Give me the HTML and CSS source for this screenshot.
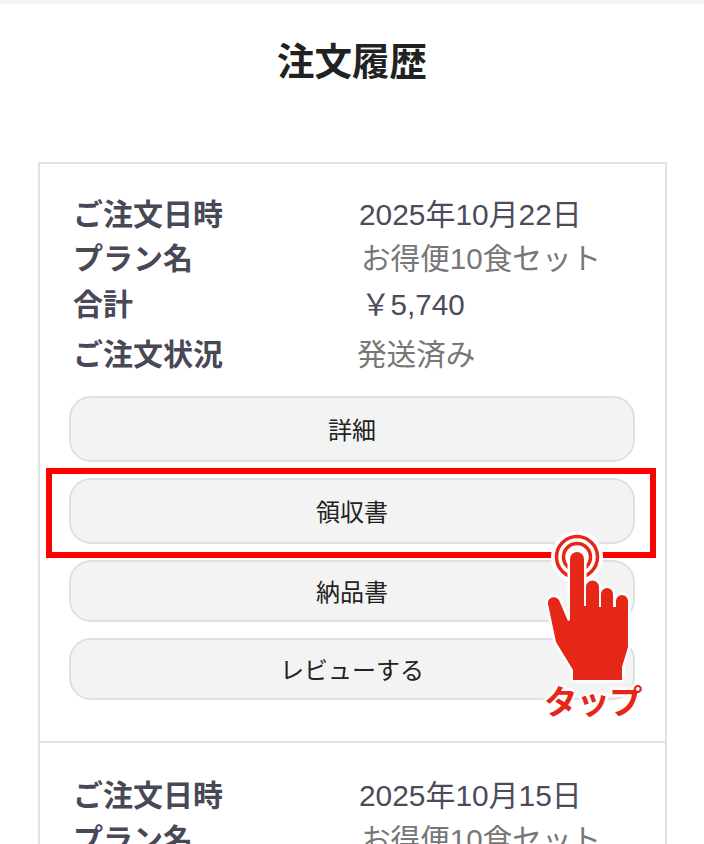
FILE: index.html
```html
<!DOCTYPE html>
<html lang="ja">
<head>
    <meta charset="UTF-8">
    <meta name="viewport" content="width=device-width, initial-scale=1.0">
    <title>注文履歴</title>
    <link rel="stylesheet" href="styles.css">
</head>
<body>
    <div class="top-line"></div>
    <h1 class="page-title">注文履歴</h1>

    <div class="order-list">
        <section class="order">
            <dl class="order-info">
                <div class="info-row row-date"><dt>ご注文日時</dt><dd class="val-date">2025年10月22日</dd></div>
                <div class="info-row row-plan"><dt>プラン名</dt><dd class="val-plan">お得便10食セット</dd></div>
                <div class="info-row row-total"><dt>合計</dt><dd class="val-total">￥5,740</dd></div>
                <div class="info-row row-status"><dt>ご注文状況</dt><dd class="val-status">発送済み</dd></div>
            </dl>
            <div class="order-buttons">
                <button type="button" class="order-btn tall">詳細</button>
                <button type="button" class="order-btn tall">領収書</button>
                <button type="button" class="order-btn">納品書</button>
                <button type="button" class="order-btn">レビューする</button>
            </div>
        </section>
        <section class="order">
            <dl class="order-info">
                <div class="info-row row-date"><dt>ご注文日時</dt><dd class="val-date">2025年10月15日</dd></div>
                <div class="info-row row-plan"><dt>プラン名</dt><dd class="val-plan">お得便10食セット</dd></div>
            </dl>
        </section>
    </div>

    <!-- annotation over the screenshot -->
    <div class="highlight-box"></div>
    <svg class="tap-hand" viewBox="0 0 140 210" aria-hidden="true">
        <circle cx="57" cy="37" r="26" fill="#fff"/>
        <circle cx="57" cy="37" r="20.500" fill="none" stroke="#e62617" stroke-width="3.500"/>
        <circle cx="57" cy="37" r="13.500" fill="none" stroke="#e62617" stroke-width="3.500"/>
        <path d="M50 39 a7 7 0 0 1 14 0 V86 h2 V67 a6.500 6.500 0 0 1 13 0 V87 h2 V74 a6 6 0 0 1 12 0 V87 h3 V81 a6 6 0 0 1 12 0 V127 L102 147 V160 H53 V150 L36 122 L28 84 a6 6 0 0 1 11 -4 L48 101 L50 100 Z" fill="#e62617" stroke="#fff" stroke-width="5" stroke-linejoin="round" paint-order="stroke"/>
    </svg>
    <span class="tap-label">タップ</span>
</body>
</html>
```

FILE: styles.css
```css
html, body {
    height: 844px;
    overflow: hidden;
}
body {
    position: relative;
    margin: 0;
    background-color: #fff;
    font-family: "Liberation Sans", "Noto Sans CJK JP", sans-serif;
}
.top-line {
    height: 4px;
    background-color: #f5f5f5;
}
.page-title {
    margin: 32px 0 73px;
    height: 53px;
    line-height: 53px;
    text-align: center;
    font-size: 37.500px;
    font-weight: 700;
    color: #222;
}
.order-list {
    margin: 0 37px 0 38px;
    border: 2px solid #e2e2e2;
}
.order {
    height: 577px;
    padding: 0 30px 0 29px;
    border-bottom: 2px solid #e2e2e2;
}
.order-info {
    margin: 0;
    padding-top: 28px;
}
.info-row {
    display: flex;
    height: 46px;
    line-height: 46px;
    font-size: 29.600px;
}
.info-row dt {
    width: 286px;
    margin-left: 4px;
    font-size: 30px;
    font-weight: 700;
    color: #484857;
}
.info-row dd {
    margin: 0;
}
.row-date { height: 44px; }
.row-total { height: 50px; }
.order + .order .order-info { padding-top: 30px; }
.val-date { color: #4b4b5a; font-size: 29.900px; }
.val-plan { margin-left: 2px !important; color: #777; }
.val-total { margin-left: 2px !important; color: #4b4b5a; }
.val-status { margin-left: -2px !important; color: #777; }
.order-buttons {
    display: flex;
    flex-direction: column;
    gap: 16px;
    margin-top: 18px;
}
.order-btn {
    height: 62px;
    padding: 0 0 2px;
    background-color: #f3f3f3;
    border: 2px solid #e0e0e0;
    border-radius: 22px;
    font-family: "Noto Sans CJK JP", sans-serif;
    font-size: 24px;
    color: #222;
}
.order-btn.tall {
    height: 66px;
}
.highlight-box {
    position: absolute;
    left: 46px;
    top: 468px;
    width: 598px;
    height: 78px;
    border: 6px solid #f00;
}
.tap-hand {
    position: absolute;
    left: 520px;
    top: 520px;
    width: 140px;
    height: 210px;
}
.tap-label {
    position: absolute;
    left: 544px;
    top: 678px;
    font-family: "Noto Sans CJK JP", sans-serif;
    font-size: 33.500px;
    line-height: 44px;
    font-weight: 700;
    letter-spacing: -1px;
    color: #e62617;
    -webkit-text-stroke: 5px #fff;
    paint-order: stroke fill;
}
```
